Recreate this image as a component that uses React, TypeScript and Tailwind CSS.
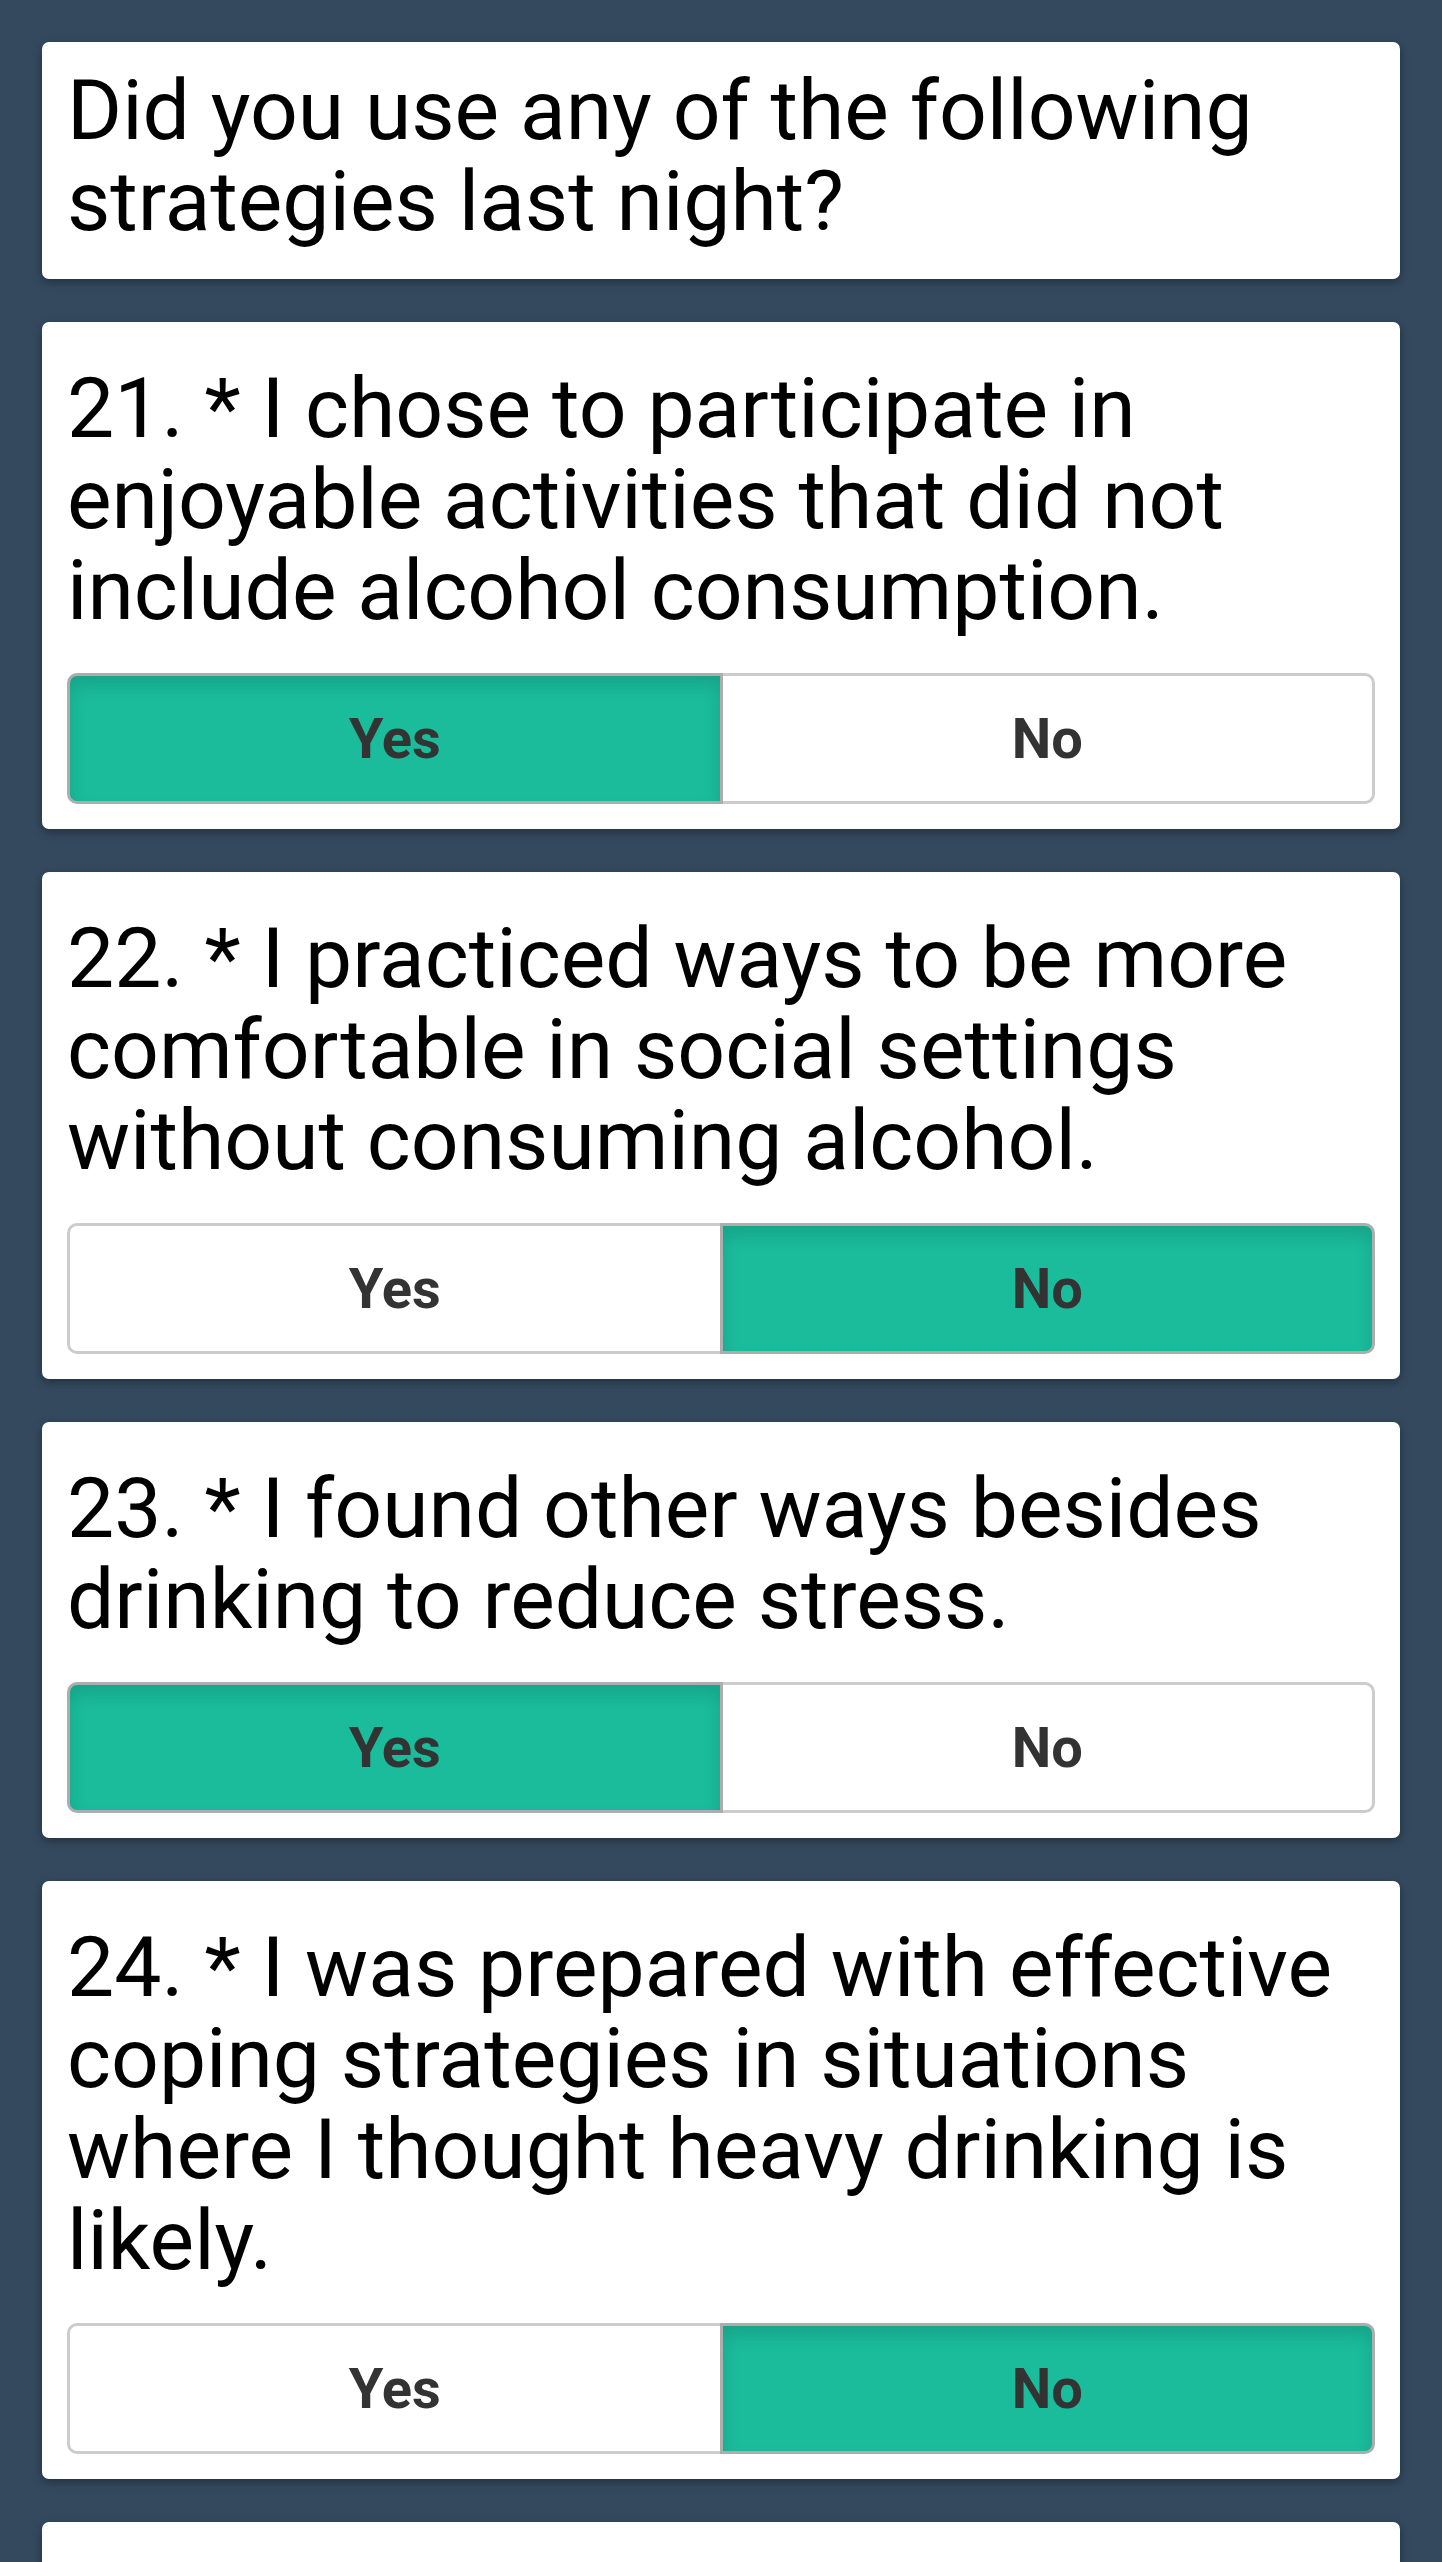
import React, { useState } from "react";

type Answer = "yes" | "no";

const questions: { id: number; text: string; answer: Answer }[] = [
  { id: 21, text: "I chose to participate in enjoyable activities that did not include alcohol consumption.", answer: "yes" },
  { id: 22, text: "I practiced ways to be more comfortable in social settings without consuming alcohol.", answer: "no" },
  { id: 23, text: "I found other ways besides drinking to reduce stress.", answer: "yes" },
  { id: 24, text: "I was prepared with effective coping strategies in situations where I thought heavy drinking is likely.", answer: "no" },
];

const Choice = ({
  label,
  active,
  side,
  onClick,
}: {
  label: string;
  active: boolean;
  side: "left" | "right";
  onClick: () => void;
}) => (
  <button
    type="button"
    onClick={onClick}
    className={
      "flex-1 h-full flex items-center justify-center border-[3px] text-[56px] font-bold text-[#333] " +
      (side === "left" ? "rounded-l-[10px] " : "rounded-r-[10px] -ml-[3px] ") +
      (active
        ? "relative z-10 bg-[#1abc9c] border-[#adadad] shadow-[inset_0_10px_17px_rgba(0,0,0,0.125)]"
        : "bg-white border-[#cccccc]")
    }
  >
    {label}
  </button>
);

const Question = ({ id, text, initial }: { id: number; text: string; initial: Answer }) => {
  const [answer, setAnswer] = useState<Answer>(initial);

  return (
    <div className="bg-white rounded-[7px] shadow-[0_3px_8px_rgba(0,0,0,0.35)] px-[25px] pt-[41px] pb-[25px]">
      <p className="text-[84px] leading-[91px] text-black">
        {id}. * {text}
      </p>
      <div className="flex mt-[37px] h-[131px]">
        <Choice label="Yes" side="left" active={answer === "yes"} onClick={() => setAnswer("yes")} />
        <Choice label="No" side="right" active={answer === "no"} onClick={() => setAnswer("no")} />
      </div>
    </div>
  );
};

export default function App() {
  return (
    <div
      className="min-h-screen bg-[#34495e] px-[42px] pt-[42px] pb-[42px] flex flex-col gap-[43px]"
      style={{ fontFamily: "Roboto, 'Noto Sans', sans-serif" }}
    >
      <div className="bg-white rounded-[7px] shadow-[0_3px_8px_rgba(0,0,0,0.35)] px-[25px] pt-[23px] pb-[32px]">
        <h1 className="text-[84px] leading-[91px] font-normal text-black">
          Did you use any of the following strategies last night?
        </h1>
      </div>

      {questions.map((q) => (
        <Question key={q.id} id={q.id} text={q.text} initial={q.answer} />
      ))}

      {/* next card, cut off at the bottom of the screen */}
      <div className="bg-white rounded-[7px] shadow-[0_3px_8px_rgba(0,0,0,0.35)] h-[420px]" />
    </div>
  );
}
